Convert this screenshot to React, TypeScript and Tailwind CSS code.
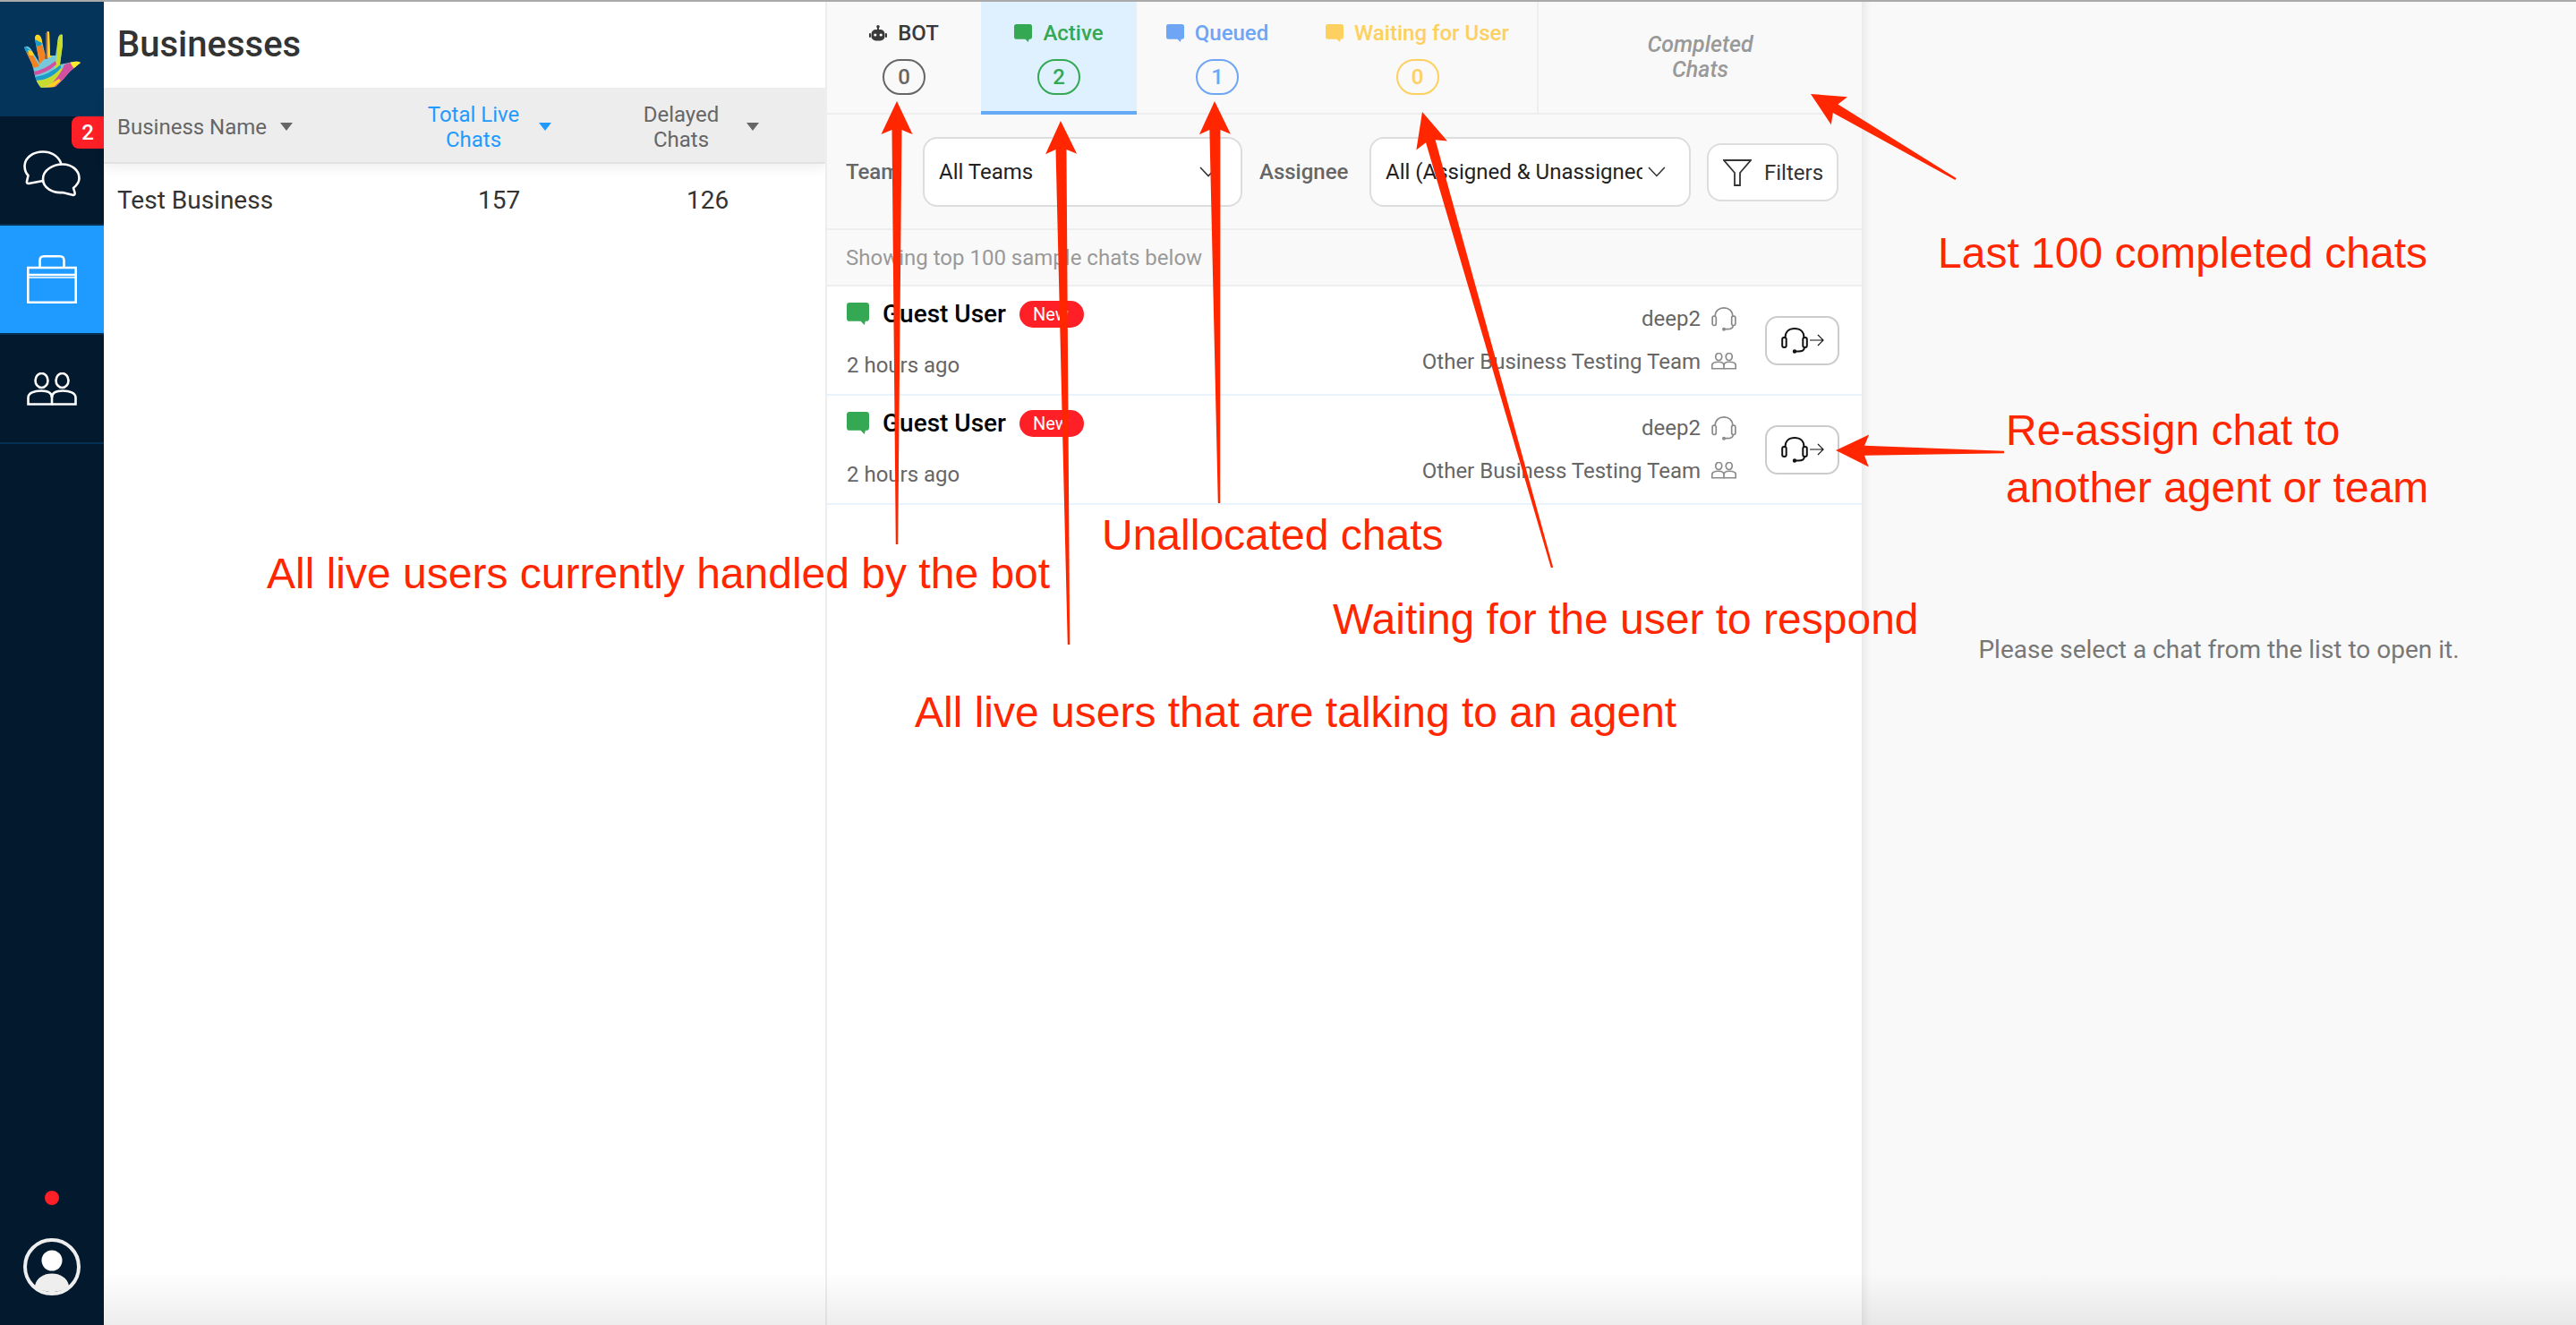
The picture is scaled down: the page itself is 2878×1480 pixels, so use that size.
import React from "react";

type Pt = [number, number];

// tapered annotation arrow, wide at the head and thin at the tail
function arrowPoints(tip: Pt, tail: Pt, headLen: number, headW: number, shaftW: number) {
  const dx = tail[0] - tip[0];
  const dy = tail[1] - tip[1];
  const len = Math.hypot(dx, dy);
  const ux = dx / len;
  const uy = dy / len;
  const nx = -uy;
  const ny = ux;
  const bx = tip[0] + ux * headLen;
  const by = tip[1] + uy * headLen;
  const pts: Pt[] = [
    tip,
    [bx + ux * 5 + (nx * headW) / 2, by + uy * 5 + (ny * headW) / 2],
    [bx + (nx * shaftW) / 2, by + (ny * shaftW) / 2],
    [tail[0] + nx * 1.2, tail[1] + ny * 1.2],
    [tail[0] - nx * 1.2, tail[1] - ny * 1.2],
    [bx - (nx * shaftW) / 2, by - (ny * shaftW) / 2],
    [bx + ux * 5 - (nx * headW) / 2, by + uy * 5 - (ny * headW) / 2],
  ];
  return pts.map((p) => p.join(",")).join(" ");
}

const ARROWS: { tip: Pt; tail: Pt; len: number; w: number; s: number }[] = [
  { tip: [1002, 113], tail: [1002, 608], len: 32, w: 35, s: 11 },
  { tip: [1185, 135], tail: [1194, 720], len: 32, w: 35, s: 12 },
  { tip: [1357, 113], tail: [1362, 562], len: 32, w: 35, s: 12 },
  { tip: [1589, 125], tail: [1734, 634], len: 34, w: 36, s: 11 },
  { tip: [2023, 105], tail: [2185, 200], len: 32, w: 36, s: 11 },
  { tip: [2051, 503], tail: [2239, 505], len: 32, w: 36, s: 11 },
];

function HandLogo() {
  return (
    <svg width="64" height="66" viewBox="26 33 64 66">
      <defs>
        <clipPath id="hand">
          <path d="M27 53Q30 50 34 54L44 70L39 44Q39 38 43 39Q46 40 47 46L51 63L51 38Q53 33 55 36L56 62L62 62L65 42Q67 37 70 39L70 50L67 72L82 69Q88 68 90 70L78 80Q70 90 62 97L46 98Q40 92 38 80L36 72Z" />
        </clipPath>
      </defs>
      <g clipPath="url(#hand)">
        <rect x="26" y="33" width="64" height="66" fill="#77c8da" />
        <path d="M26 50L36 58L34 64L26 56Z" fill="#1c9cc8" />
        <path d="M28 58L36 60L44 74L37 76Z" fill="#f58220" />
        <path d="M31 56L36 57L38 62L33 62Z" fill="#ffd21f" />
        <path d="M38 38L48 38L47 48L40 46Z" fill="#ffd21f" />
        <path d="M39 44L47 48L44 54L40 50Z" fill="#1c9cc8" />
        <path d="M41 52L47 50L51 64L44 72Z" fill="#f58220" />
        <path d="M50 33L53 33L53 66L50 66Z" fill="#a5602c" />
        <path d="M53 33L57 33L57 64L53 64Z" fill="#ffd21f" />
        <path d="M64 36L72 36L72 52L68 74L60 80L64 60Z" fill="#c8dc30" />
        <path d="M37 80Q50 78 62 68L63 72Q52 82 38 84Z" fill="#d1519f" />
        <path d="M39 86Q54 84 68 72L68 78Q54 90 41 90Z" fill="#1c9cc8" />
        <path d="M40 90Q56 90 68 76L72 80Q60 94 44 99L40 99Z" fill="#c8dc30" />
        <path d="M52 99Q68 84 72 72L92 66L92 72L72 90L60 99Z" fill="#d1519f" />
        <path d="M78 69L92 66L92 74L82 76Z" fill="#f6ee2a" />
        <path d="M46 99Q56 94 66 88L68 90L58 99Z" fill="#ffd21f" />
      </g>
    </svg>
  );
}

function ChatsIcon() {
  return (
    <svg width="64" height="52" viewBox="0 0 64 52" fill="none" stroke="white" strokeWidth="2.6" strokeLinejoin="round" strokeLinecap="round">
      <path d="M22 34L6 37Q3.5 37 4 34.5L5.5 28C2.5 25 1.5 21 1.5 17C2 8 11 1.5 22 1.5C31 1.5 39 6 42 14" />
      <path d="M44 15.5C33 15.5 22 22 22 32C22 42 33 48 44 47L56 50Q58 50 57.5 47L56 42C61 38 62.5 34 62.5 31C62.5 22 54 15.5 44 15.5Z" />
    </svg>
  );
}

function CaseIcon() {
  return (
    <svg width="56" height="54" viewBox="0 0 56 54" fill="none" stroke="white" strokeWidth="2.6">
      <path d="M1.3 14H54.7V52.7H1.3Z" />
      <path d="M1.3 22H54.7" />
      <path d="M1.3 25H54.7" strokeWidth="1.6" />
      <path d="M14.5 14V6Q14.5 1.3 19 1.3H37Q41.5 1.3 41.5 6V14" />
    </svg>
  );
}

function TeamIcon({ size, color, sw }: { size: number; color: string; sw: number }) {
  return (
    <svg width={size} height={(size * 37) / 56} viewBox="0 0 56 37" fill="none" stroke={color} strokeWidth={sw}>
      <ellipse cx="16.5" cy="9" rx="7" ry="8" />
      <ellipse cx="39.5" cy="9" rx="7" ry="8" />
      <path d="M1.5 35.5V28C1.5 23 8 20.5 16 20.5C24 20.5 28 23.5 28 28V35.5Z" />
      <path d="M28 28C28 23.5 32 20.5 40 20.5C48 20.5 54.5 23 54.5 28V35.5H28" />
    </svg>
  );
}

function HeadsetIcon({ size, color, sw }: { size: number; color: string; sw: number }) {
  return (
    <svg width={size} height={size} viewBox="0 0 30 30" fill="none" stroke={color} strokeWidth={sw}>
      <path d="M4.5 12C4.5 5.5 9 2 15 2C21 2 25.5 5.5 25.5 12" />
      <rect x="1.2" y="12" width="4.5" height="11" rx="2" />
      <rect x="24.3" y="12" width="4.5" height="11" rx="2" />
      <path d="M26 23C26 26 23 27.5 19 27.5H16" />
      <circle cx="15" cy="27.5" r="1.2" fill={color} />
    </svg>
  );
}

function BubbleIcon({ color, size }: { color: string; size: number }) {
  return (
    <svg width={size} height={size} viewBox="0 0 24 24" fill={color}>
      <path d="M3 0H21Q24 0 24 3V17Q24 20 21 20H20L19 24L15 20H3Q0 20 0 17V3Q0 0 3 0Z" />
    </svg>
  );
}

function BotIcon() {
  return (
    <svg width="20" height="18" viewBox="0 0 20 18" fill="#3a3a3a">
      <circle cx="10" cy="1.8" r="1.8" />
      <rect x="9" y="2" width="2" height="3" />
      <rect x="2.5" y="5" width="15" height="12.5" rx="5" />
      <rect x="0" y="9" width="2" height="5" rx="1" />
      <rect x="18" y="9" width="2" height="5" rx="1" />
      <circle cx="6.8" cy="11" r="1.6" fill="white" />
      <circle cx="13.2" cy="11" r="1.6" fill="white" />
    </svg>
  );
}

function Caret({ blue }: { blue?: boolean }) {
  return (
    <svg width="14" height="9" viewBox="0 0 14 9" className={blue ? "fill-[#1f9bff]" : "fill-[#666666]"}>
      <path d="M0 0H14L7 9Z" />
    </svg>
  );
}

function Chevron() {
  return (
    <svg width="20" height="12" viewBox="0 0 20 12" fill="none" stroke="#333333" strokeWidth="1.6">
      <path d="M1 1L10 10.5L19 1" />
    </svg>
  );
}

function Sidebar() {
  return (
    <aside className="w-[116px] shrink-0 flex flex-col bg-[#02192e]">
      <div className="h-[128px] bg-[#05345a] flex items-center justify-center">
        <HandLogo />
      </div>
      <div className="relative h-[122px] border-b-2 border-[#053054] flex items-center justify-center pt-[7px]">
        <span className="absolute top-0 right-0 w-[36px] h-[36px] bg-[#ff1f26] rounded-bl-[8px] rounded-tl-[8px] flex items-center justify-center text-white text-[24px] font-medium">
          2
        </span>
        <ChatsIcon />
      </div>
      <div className="h-[120px] bg-[#1f9bff] flex items-center justify-center">
        <CaseIcon />
      </div>
      <div className="h-[124px] border-t-2 border-b-2 border-[#053054] flex items-center justify-center">
        <TeamIcon size={56} color="white" sw={2.6} />
      </div>
      <div className="mt-auto flex flex-col items-center pb-[33px]">
        <div className="w-4 h-4 rounded-full bg-[#ff1f26] mb-[37px]" />
        <svg width="64" height="64" viewBox="0 0 64 64">
          <circle cx="32" cy="32" r="30" fill="none" stroke="#eeeeee" strokeWidth="4" />
          <circle cx="32" cy="25" r="11.5" fill="white" />
          <path d="M13 53C15 44 23 39.5 32 39.5C41 39.5 49 44 51 53C46 58 39 60 32 60C25 60 18 58 13 53Z" fill="#eeeeee" />
        </svg>
      </div>
    </aside>
  );
}

function BusinessList() {
  return (
    <section className="w-[806px] shrink-0 bg-white flex flex-col">
      <h1 className="h-[96px] pl-[15px] flex items-center text-[40px] font-medium text-[#333333]">Businesses</h1>
      <div className="h-[85px] pt-[4px] bg-[#ededed] border-b-2 border-[#e2e2e2] shadow-[0_6px_12px_rgba(0,0,0,0.06)] grid grid-cols-[340px_232px_234px] items-center text-[24px] leading-[28px] text-[#666666]">
        <div className="pl-[15px] flex items-center gap-[15px]">
          Business Name
          <Caret />
        </div>
        <div className="flex items-center text-[#1f9bff]">
          <span className="w-[146px] text-center">
            Total Live
            <br />
            Chats
          </span>
          <Caret blue />
        </div>
        <div className="flex items-center">
          <span className="w-[146px] text-center">
            Delayed
            <br />
            Chats
          </span>
          <Caret />
        </div>
      </div>
      <div className="h-[82px] grid grid-cols-[340px_232px_234px] items-center text-[28px] text-[#333333]">
        <span className="pl-[15px]">Test Business</span>
        <span className="pl-[78px]">157</span>
        <span className="pl-[79px]">126</span>
      </div>
    </section>
  );
}

const TABS = [
  { label: "BOT", count: 0, width: "w-[172px]", text: "text-[#3a3a3a]", ring: "border-[#666666] text-[#666666]", icon: <BotIcon /> },
  { label: "Active", count: 2, width: "w-[174px] bg-[#dff1ff] border-b-4 border-[#66a9f5]", text: "text-[#34a853]", ring: "border-[#34a853] text-[#34a853]", icon: <BubbleIcon color="#34a853" size={20} /> },
  { label: "Queued", count: 1, width: "w-[180px]", text: "text-[#6ea6f5]", ring: "border-[#6ea6f5] text-[#6ea6f5]", icon: <BubbleIcon color="#6ea6f5" size={20} /> },
  { label: "Waiting for User", count: 0, width: "w-[267px]", text: "text-[#fdd05f]", ring: "border-[#fdd05f] text-[#fdd05f]", icon: <BubbleIcon color="#fdd05f" size={20} /> },
];

function ChatRow() {
  return (
    <div className="h-[122px] bg-white border-b-2 border-[#e8f3fc] flex items-center pl-[22px] pr-[25px]">
      <div className="flex flex-col flex-1">
        <div className="flex items-center h-[32px] -mt-[2px]">
          <BubbleIcon color="#34a853" size={25} />
          <span className="ml-[15px] text-[28px] font-medium text-black">Guest User</span>
          <span className="ml-[15px] w-[72px] h-[30px] pl-[15px] rounded-[15px] bg-[#ff1f26] text-white text-[20px] leading-[30px] overflow-hidden">New</span>
        </div>
        <span className="mt-[25px] text-[24px] leading-[32px] text-[#666666]">2 hours ago</span>
      </div>
      <div className="flex flex-col items-end gap-[20px] text-[24px] leading-[28px] text-[#666666] mr-[32px] -mt-[1px]">
        <div className="flex items-center gap-[12px]">
          deep2
          <HeadsetIcon size={28} color="#8a8a8a" sw={1.8} />
        </div>
        <div className="flex items-center gap-[12px]">
          Other Business Testing Team
          <TeamIcon size={28} color="#8a8a8a" sw={3.4} />
        </div>
      </div>
      <button className="w-[83px] h-[55px] rounded-[14px] border-2 border-[#cccccc] bg-white flex items-center justify-center gap-[2px]">
        <HeadsetIcon size={30} color="#111111" sw={2} />
        <svg width="16" height="14" viewBox="0 0 16 14" fill="none" stroke="#111111" strokeWidth="1.2">
          <path d="M0 7H15M9 1L15 7L9 13" />
        </svg>
      </button>
    </div>
  );
}

function ChatPanel() {
  return (
    <section className="w-[1158px] shrink-0 border-l-2 border-[#eeeeee] bg-white flex flex-col">
      <div className="h-[126px] bg-[#f9f9f9] border-b-2 border-[#eeeeee] flex">
        {TABS.map((t, i) => (
          <div key={t.label} className={`${t.width} h-[126px] flex flex-col items-center pt-[23px]`}>
            <div className={`flex items-center gap-[12px] h-[24px] text-[24px] font-medium ${t.text}`}>
              {t.icon}
              {t.label}
            </div>
            <span className={`mt-[17px] w-[48px] h-[40px] rounded-[20px] border-2 flex items-center justify-center text-[24px] font-medium ${t.ring}`}>
              {t.count}
            </span>
          </div>
        ))}
        <div className="flex-1 border-l-2 border-[#eeeeee] flex items-center justify-center text-center text-[25px] leading-[28px] italic font-medium text-[#999999] h-[124px]">
          Completed
          <br />
          Chats
        </div>
      </div>
      <div className="h-[129px] bg-[#f9f9f9] border-b-2 border-[#eeeeee] flex items-center pl-[21px] text-[24px]">
        <span className="w-[86px] font-medium text-[#666666]">Team</span>
        <div className="w-[357px] h-[78px] rounded-[16px] border-2 border-[#dddddd] bg-white flex items-center pl-[16px] pr-[26px] justify-between text-[#222222]">
          All Teams
          <Chevron />
        </div>
        <span className="w-[142px] pl-[19px] font-medium text-[#666666]">Assignee</span>
        <div className="w-[359px] h-[78px] rounded-[16px] border-2 border-[#dddddd] bg-white flex items-center pl-[16px] pr-[26px] gap-[6px] text-[#222222]">
          <span className="w-[290px] whitespace-nowrap overflow-hidden">All (Assigned &amp; Unassigned)</span>
          <Chevron />
        </div>
        <div className="ml-[18px] mt-[2px] w-[147px] h-[65px] rounded-[16px] border-2 border-[#dddddd] bg-white flex items-center pl-[16px] gap-[14px] text-[#333333]">
          <svg width="32" height="30" viewBox="0 0 32 30" fill="none" stroke="#333333" strokeWidth="1.8" className="shrink-0">
            <path d="M1 1H31L19 15V29H13V15Z" />
          </svg>
          Filters
        </div>
      </div>
      <div className="h-[63px] bg-[#f9f9f9] border-b-2 border-[#eeeeee] flex items-center pl-[21px] text-[24px] text-[#999999]">
        Showing top 100 sample chats below
      </div>
      <ChatRow />
      <ChatRow />
    </section>
  );
}

function Annotations() {
  return (
    <div className="absolute inset-0 pointer-events-none font-['Liberation_Sans',sans-serif] text-[#ff2600] text-[48px] leading-[56px] whitespace-nowrap">
      <svg width="2878" height="1480" className="absolute inset-0">
        {ARROWS.map((a, i) => (
          <polygon key={i} points={arrowPoints(a.tip, a.tail, a.len, a.w, a.s)} fill="#ff2600" />
        ))}
      </svg>
      <span className="absolute left-[298px] top-[613px]">All live users currently handled by the bot</span>
      <span className="absolute left-[1022px] top-[768px]">All live users that are talking to an agent</span>
      <span className="absolute left-[1231px] top-[570px]">Unallocated chats</span>
      <span className="absolute left-[1489px] top-[664px]">Waiting for the user to respond</span>
      <span className="absolute left-[2165px] top-[255px]">Last 100 completed chats</span>
      <span className="absolute left-[2241px] top-[453px]">Re-assign chat to</span>
      <span className="absolute left-[2241px] top-[517px]">another agent or team</span>
    </div>
  );
}

export default function App() {
  return (
    <div className="relative w-[2878px] h-[1480px] overflow-hidden bg-white font-['Roboto',sans-serif] flex flex-col">
      <div className="h-[2px] bg-[#aaaaaa] shrink-0" />
      <div className="flex flex-1 min-h-0">
        <Sidebar />
        <div className="relative flex flex-1 min-w-0">
          <BusinessList />
          <ChatPanel />
          <div className="flex-1 bg-[#f9f9f9] shadow-[inset_10px_0_8px_-6px_rgba(0,0,0,0.07)] flex items-center justify-center pb-[30px] text-[28px] text-[#777777]">
            Please select a chat from the list to open it.
          </div>
          <div className="absolute left-0 right-0 bottom-0 h-[60px] bg-gradient-to-b from-transparent to-[#00000012]" />
        </div>
      </div>
      <Annotations />
    </div>
  );
}
